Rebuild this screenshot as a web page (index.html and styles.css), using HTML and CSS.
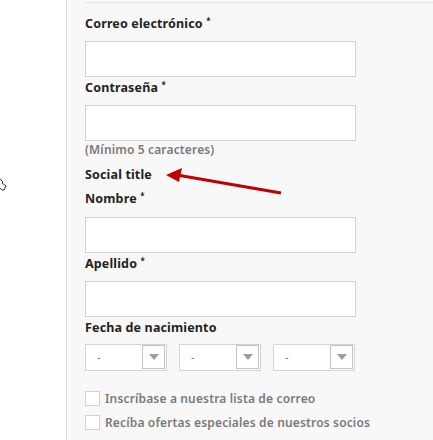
FILE: index.html
```html
<!DOCTYPE html>
<html lang="es">
<head>
<meta charset="utf-8">
<title>Registro</title>
<link rel="stylesheet" href="styles.css">
</head>
<body>
<svg class="cursor" width="10" height="18" viewBox="0 0 10 18"><path d="M-3 2 L3 8 L2 9 L6 12 L4 16 L2 16 L-3 11 Z" fill="#fff" stroke="#333" stroke-width="1"/></svg>
<div class="panel">
  <div class="sep"></div>
  <form class="form">
    <label class="label l-first">Correo electrónico <sup>*</sup></label>
    <div class="input"></div>
    <label class="label l-after">Contraseña <sup>*</sup></label>
    <div class="input"></div>
    <p class="hint">(Mínimo 5 caracteres)</p>
    <label class="label l-social">Social title</label>
    <label class="label l-name">Nombre <sup>*</sup></label>
    <div class="input"></div>
    <label class="label l-after">Apellido <sup>*</sup></label>
    <div class="input"></div>
    <label class="label l-after">Fecha de nacimiento</label>
    <div class="dates">
      <div class="select"><span class="val">-</span><span class="arrow"><i></i></span></div>
      <div class="select"><span class="val">-</span><span class="arrow"><i></i></span></div>
      <div class="select"><span class="val">-</span><span class="arrow"><i></i></span></div>
    </div>
    <div class="check c-first"><span class="box"></span><span class="ctext">Inscríbase a nuestra lista de correo</span></div>
    <div class="check c-second"><span class="box"></span><span class="ctext">Recíba ofertas especiales de nuestros socios</span></div>
  </form>
</div>
<svg class="annot" width="130" height="40" viewBox="0 0 130 40"><line x1="12" y1="11" x2="116" y2="29" stroke="#c00000" stroke-width="3"/><polygon points="1,11 17,4 14,18" fill="#c00000"/></svg>
</body>
</html>
```
FILE: styles.css
```css
html, body {
  margin: 0;
  padding: 0;
  background: #ffffff;
}
body {
  width: 433px;
  height: 440px;
  overflow: hidden;
  position: relative;
  font-family: "Noto Sans", "Open Sans", sans-serif;
}
.panel {
  margin-left: 66px;
  height: 440px;
  border-left: 1px solid #dcdcdc;
  background: #f8f8f8;
  box-sizing: border-box;
  padding-top: 2px;
}
.sep {
  margin-left: 18px;
  height: 1px;
  background: #e2e2e2;
}
.form {
  margin: 0;
  padding-left: 18px;
  display: flex;
  flex-direction: column;
  align-items: flex-start;
}
.label {
  display: block;
  font-size: 12.5px;
  letter-spacing: 0.15px;
  line-height: 16px;
  font-weight: 700;
  color: #232323;
}
.label sup {
  font-size: 8px;
  vertical-align: 0;
  position: relative;
  top: -4px;
}
.l-first { margin-top: 13px; margin-bottom: 8px; }
.l-after { margin-top: 3px; margin-bottom: 8px; }
.l-social { margin-top: 9px; }
.l-name { margin-top: 8px; margin-bottom: 9px; }
.input {
  width: 271px;
  height: 36px;
  box-sizing: border-box;
  background: #fff;
  border: 1px solid #d2d2d2;
}
.hint {
  margin: 1px 0 0;
  font-size: 12px;
  letter-spacing: 0.15px;
  line-height: 16px;
  font-weight: 600;
  color: #7a7a7a;
}
.dates {
  display: flex;
  gap: 12px;
}
.select {
  width: 82px;
  height: 27px;
  box-sizing: border-box;
  border: 1px solid #d4d4d4;
  background: #fff;
  display: flex;
  align-items: flex-start;
  justify-content: space-between;
}
.val {
  margin-left: 11px;
  line-height: 24px;
  font-size: 11px;
  color: #777;
}
.arrow {
  width: 23px;
  height: 24px;
  box-sizing: border-box;
  border: 1px solid #c4c4c4;
  margin-right: 1px;
  display: flex;
  align-items: center;
  justify-content: center;
}
.arrow i {
  width: 0;
  height: 0;
  border-left: 5px solid transparent;
  border-right: 5px solid transparent;
  border-top: 6px solid #9a9a9a;
}
.check {
  display: flex;
  align-items: center;
  gap: 5px;
}
.c-first { margin-top: 20px; }
.c-second { margin-top: 9px; }
.box {
  width: 15px;
  height: 15px;
  box-sizing: border-box;
  border: 1px solid #d2d2d2;
  background: #fff;
}
.ctext {
  font-size: 12px;
  letter-spacing: 0.15px;
  line-height: 15px;
  font-weight: 600;
  color: #7a7a7a;
}
.annot {
  position: absolute;
  left: 165px;
  top: 164px;
}
.cursor {
  position: absolute;
  left: 0;
  top: 174px;
}
```
